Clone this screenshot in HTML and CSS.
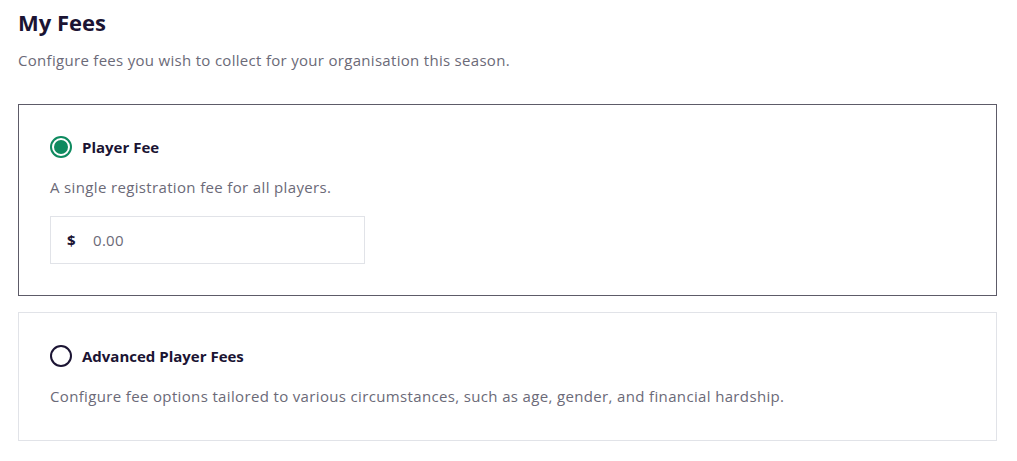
FILE: index.html
```html
<!DOCTYPE html>
<html>
<head>
<meta charset="utf-8">
<link rel="stylesheet" href="styles.css">
</head>
<body>
<main class="page">
  <h1 class="title">My Fees</h1>
  <p class="subtitle">Configure fees you wish to collect for your organisation this season.</p>

  <section class="card card-selected">
    <label class="option">
      <span class="radio radio-on"><span class="dot"></span></span>
      <span class="option-label">Player Fee</span>
    </label>
    <p class="desc">A single registration fee for all players.</p>
    <div class="money">
      <span class="currency">$</span>
      <span class="amount">0.00</span>
    </div>
  </section>

  <section class="card card-plain">
    <label class="option">
      <span class="radio"></span>
      <span class="option-label">Advanced Player Fees</span>
    </label>
    <p class="desc">Configure fee options tailored to various circumstances, such as age, gender, and financial hardship.</p>
  </section>
</main>
</body>
</html>
```

FILE: styles.css
```css
* { box-sizing: border-box; }
html, body { margin: 0; padding: 0; background: #fff; }
body {
  font-family: "Open Sans", "Noto Sans", sans-serif;
  color: #1b1433;
}
.page {
  padding: 6px 20px 0 18px;
  display: flex;
  flex-direction: column;
}
.title {
  margin: 0;
  font-size: 22px;
  line-height: 32px;
  font-weight: 700;
  color: #1b1433;
}
.subtitle {
  margin: 12px 0 0;
  font-size: 15px;
  line-height: 20px;
  letter-spacing: 0.3px;
  color: #6b6a78;
}
.card {
  border: 1px solid #e1e3e8;
}
.card-selected {
  margin-top: 34px;
  border-color: #5d5b68;
  padding: 30px 31px 31px;
}
.card-plain {
  margin-top: 16px;
  padding: 31px 31px 33px;
}
.option {
  display: flex;
  align-items: center;
  gap: 10px;
  height: 24px;
}
.radio {
  width: 22px;
  height: 22px;
  border-radius: 50%;
  border: 2px solid #1b1433;
  display: flex;
  align-items: center;
  justify-content: center;
  flex: none;
}
.radio-on { border-color: #0e8a5f; }
.dot {
  width: 14px;
  height: 14px;
  border-radius: 50%;
  background: #0e8a5f;
}
.option-label {
  font-size: 15px;
  font-weight: 700;
  color: #1b1433;
}
.desc {
  margin: 17px 0 0;
  font-size: 15px;
  line-height: 22px;
  letter-spacing: 0.35px;
  color: #6b6a78;
}
.money {
  margin-top: 18px;
  width: 315px;
  height: 48px;
  border: 1px solid #e1e3e8;
  display: flex;
  align-items: center;
  padding-left: 16px;
  font-size: 15px;
}
.currency {
  font-weight: 700;
  color: #1b1433;
  width: 26px;
}
.amount { color: #6b6a78; letter-spacing: 0.3px; }
```
